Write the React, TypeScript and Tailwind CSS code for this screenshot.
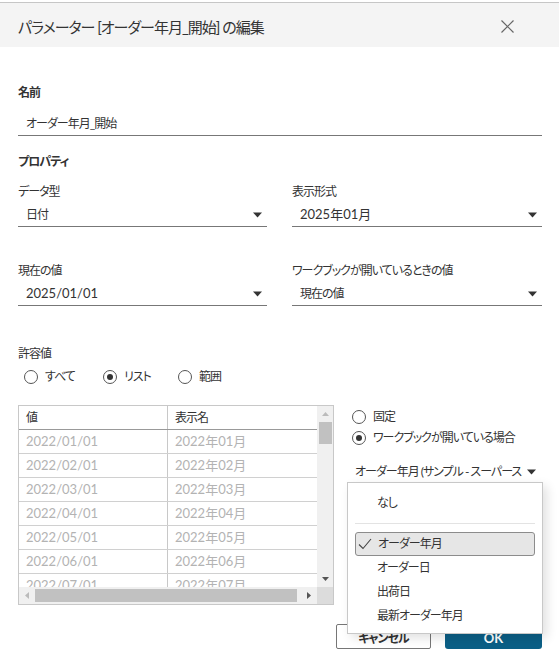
import React from "react";

const rows = ["01", "02", "03", "04", "05", "06", "07"];

// japanese text in the reference is set in a narrow UI face; tighten Noto to match
const jp = "text-[12px] tracking-[-1px]";

function Caret() {
  return (
    <svg width="9" height="6" viewBox="0 0 9 6" className="shrink-0">
      <path d="M0 0.5h9L4.5 5.5z" fill="#333" />
    </svg>
  );
}

function Radio({ checked }: { checked?: boolean }) {
  return (
    <span className="flex h-[14px] w-[14px] shrink-0 items-center justify-center rounded-full border border-[#555] bg-white">
      {checked && <span className="h-[6px] w-[6px] rounded-full bg-[#333]" />}
    </span>
  );
}

function Field({ label, value, valueJp }: { label: string; value: string; valueJp?: boolean }) {
  return (
    <div>
      <div className={`${jp} leading-[18px]`}>{label}</div>
      <div className="mt-[3px] flex h-[23px] items-center justify-between border-b border-[#777] pl-2 pr-[5px] text-[13px]">
        <span className={valueJp ? jp : ""}>{value}</span>
        <Caret />
      </div>
    </div>
  );
}

export default function App() {
  return (
    <div className="relative h-[667px] w-full overflow-hidden bg-white text-[#333] font-['Lato','Noto_Sans_CJK_JP',sans-serif] [font-feature-settings:'palt']">
      <div className="h-[2px] bg-white" />
      <div className="h-px bg-[#c6c6c6]" />
      <div className="flex h-[44px] items-center justify-between bg-[#f4f4f4] pl-[18px] pr-[45px] pt-[3px]">
        <h1 className="text-[15px] leading-[22px] tracking-[-1px]">パラメーター [オーダー年月_開始] の編集</h1>
        <svg width="13" height="13" viewBox="0 0 13 13">
          <path d="M0.5 0.5L12.5 12.5M12.5 0.5L0.5 12.5" stroke="#666" strokeWidth="1.2" />
        </svg>
      </div>

      <div className="pl-[18px] pr-[17px]">
        <div className={`mt-[37px] ${jp} font-bold leading-[18px]`}>名前</div>
        <div className={`mt-[11px] flex h-[23px] items-center border-b border-[#777] pl-2 ${jp}`}>
          オーダー年月_開始
        </div>

        <div className={`mt-[17px] ${jp} font-bold leading-[18px]`}>プロパティ</div>

        <div className="mt-[12px] grid grid-cols-[249px_250px] gap-x-[25px] gap-y-[35px]">
          <Field label="データ型" value="日付" valueJp />
          <Field label="表示形式" value="2025年01月" />
          <Field label="現在の値" value="2025/01/01" />
          <Field label="ワークブックが開いているときの値" value="現在の値" valueJp />
        </div>

        <div className={`mt-[39px] ${jp} leading-[18px]`}>許容値</div>
        <div className={`mt-[5px] flex h-[18px] items-center pl-[6px] ${jp}`}>
          <label className="flex w-[79px] items-center gap-[7px]">
            <Radio />
            すべて
          </label>
          <label className="flex w-[75px] items-center gap-[7px]">
            <Radio checked />
            リスト
          </label>
          <label className="flex items-center gap-[7px]">
            <Radio />
            範囲
          </label>
        </div>

        <div className="mt-[19px] flex">
          {/* list table */}
          <div className="flex h-[200px] w-[316px] shrink-0 flex-col border border-[#c8c8c8] text-[13px]">
            <div className="flex min-h-0 flex-1">
              <div className="flex-1 overflow-hidden">
                <div className={`grid h-[24px] grid-cols-[149px_149px] border-b border-[#999] ${jp}`}>
                  <div className="flex items-center border-r border-[#c8c8c8] pl-[7px]">値</div>
                  <div className="flex items-center pl-[7px]">表示名</div>
                </div>
                {rows.map((m) => (
                  <div key={m} className="grid h-[24px] grid-cols-[149px_149px] border-b border-[#d0d0d0] text-[#b3b3b3]">
                    <div className="flex items-center border-r border-[#c8c8c8] pl-[7px]">2022/{m}/01</div>
                    <div className="flex items-center pl-[7px]">2022年{m}月</div>
                  </div>
                ))}
              </div>
              <div className="flex w-[16px] shrink-0 flex-col items-center bg-[#f0f0f0]">
                <svg width="7" height="4" viewBox="0 0 7 4" className="mt-[6px]">
                  <path d="M0 4h7L3.5 0z" fill="#bbb" />
                </svg>
                <div className="mt-[6px] h-[22px] w-[13px] bg-[#c1c1c1]" />
                <div className="flex-1" />
                <svg width="7" height="4" viewBox="0 0 7 4" className="mb-[6px]">
                  <path d="M0 0h7L3.5 4z" fill="#555" />
                </svg>
              </div>
            </div>
            <div className="flex h-[17px] shrink-0">
              <div className="flex flex-1 items-center bg-[#f0f0f0]">
                <svg width="4" height="7" viewBox="0 0 4 7" className="ml-[6px]">
                  <path d="M4 0v7L0 3.5z" fill="#bbb" />
                </svg>
                <div className="ml-[6px] h-[13px] w-[262px] bg-[#c1c1c1]" />
                <div className="flex-1" />
                <svg width="4" height="7" viewBox="0 0 4 7" className="mr-[6px]">
                  <path d="M0 0v7L4 3.5z" fill="#555" />
                </svg>
              </div>
              <div className="w-[16px] bg-[#dcdcdc]" />
            </div>
          </div>

          {/* source options */}
          <div className={`ml-[13px] w-[196px] ${jp}`}>
            <label className="mt-[1px] flex h-[21px] items-center gap-[7px] pl-[5px]">
              <Radio />
              固定
            </label>
            <label className="flex h-[21px] items-center gap-[7px] pl-[5px]">
              <Radio checked />
              ワークブックが開いている場合
            </label>
            <div className="relative mt-[12px]">
              <div className="flex h-[24px] items-center pl-[8px] pr-[7px]">
                <span className="flex-1 overflow-hidden whitespace-nowrap">オーダー年月 (サンプル - スーパーストア)</span>
                <span className="ml-[4px]">
                  <Caret />
                </span>
              </div>
              <div className="absolute left-0 top-[22px] z-10 w-[196px] border border-[#c8c8c8] bg-white pb-[5px] pt-[8px] shadow-[4px_4px_10px_rgba(0,0,0,0.12)]">
                <div className="flex h-[24px] items-center pl-[29px]">なし</div>
                <div className="mx-[7px] my-[8px] h-px bg-[#e3e3e3]" />
                <div className="mx-[7px] flex h-[24px] items-center rounded-[3px] border border-[#8c8c8c] bg-[#e6e6e6] pl-[2px]">
                  <svg width="14" height="12" viewBox="0 0 14 12" className="mr-[6px]">
                    <path d="M1 6.5L5 10.5L13 1" fill="none" stroke="#444" strokeWidth="1.1" />
                  </svg>
                  オーダー年月
                </div>
                <div className="flex h-[24px] items-center pl-[29px]">オーダー日</div>
                <div className="flex h-[24px] items-center pl-[29px]">出荷日</div>
                <div className="flex h-[24px] items-center pl-[29px]">最新オーダー年月</div>
              </div>
            </div>
          </div>
        </div>

        <div className="mt-[19px] flex justify-end gap-[14px]">
          <button className={`h-[25px] w-[95px] rounded-[2px] border border-[#767676] bg-white pt-[4px] font-bold ${jp}`}>キャンセル</button>
          <button className="h-[25px] w-[97px] rounded-[3px] bg-[#0b5f86] pt-[4px] text-[13px] font-bold text-white">OK</button>
        </div>
      </div>
    </div>
  );
}
